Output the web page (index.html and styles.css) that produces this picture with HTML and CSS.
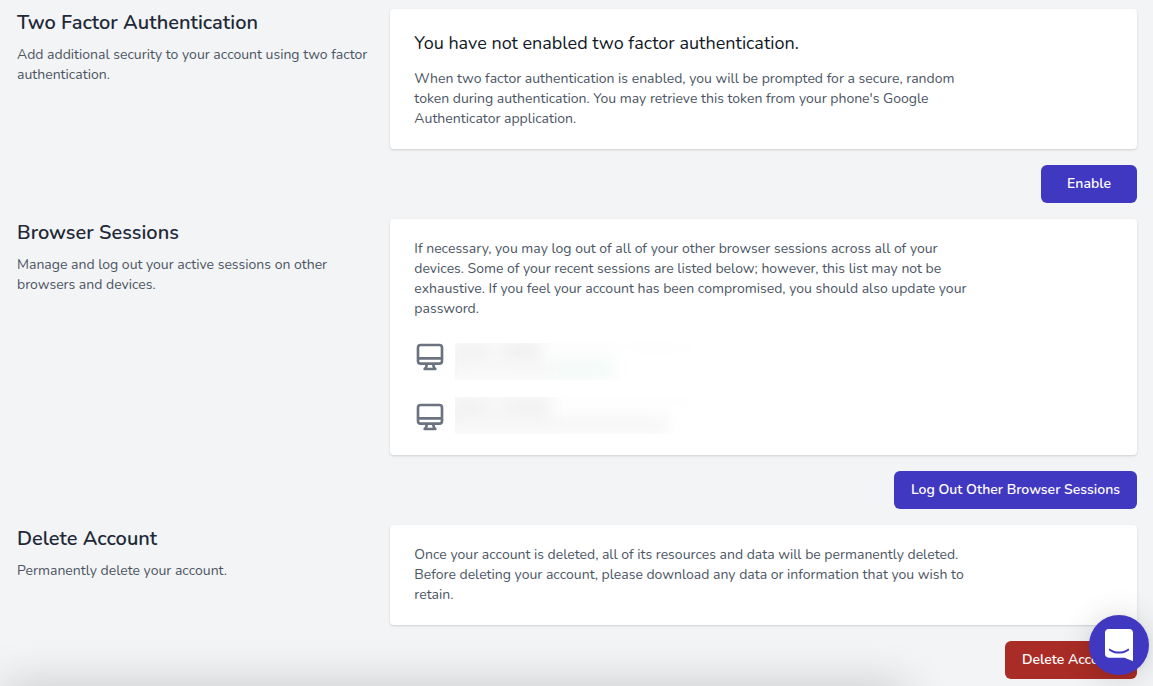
FILE: index.html
```html
<!DOCTYPE html>
<html lang="en">
<head>
    <meta charset="UTF-8">
    <meta name="viewport" content="width=device-width, initial-scale=1.0">
    <title>Profile</title>
    <link rel="stylesheet" href="styles.css">
</head>
<body>

    <main class="settings">

        <section class="section">
            <div class="section-title">
                <h2>Two Factor Authentication</h2>
                <p>Add additional security to your account using two factor authentication.</p>
            </div>
            <div class="section-content">
                <div class="card">
                    <h3>You have not enabled two factor authentication.</h3>
                    <p>When two factor authentication is enabled, you will be prompted for a secure, random token during authentication. You may retrieve this token from your phone's Google Authenticator application.</p>
                </div>
                <button type="button" class="btn">Enable</button>
            </div>
        </section>

        <section class="section">
            <div class="section-title">
                <h2>Browser Sessions</h2>
                <p>Manage and log out your active sessions on other browsers and devices.</p>
            </div>
            <div class="section-content">
                <div class="card">
                    <p>If necessary, you may log out of all of your other browser sessions across all of your devices. Some of your recent sessions are listed below; however, this list may not be exhaustive. If you feel your account has been compromised, you should also update your password.</p>
                    <div class="sessions">
                        <div class="session-icons">
                            <svg class="device" viewBox="0 0 24 24"><path d="M9.75 17L9 20l-1 1h8l-1-1-.75-3M3 13h18M5 17h14a2 2 0 002-2V5a2 2 0 00-2-2H5a2 2 0 00-2 2v10a2 2 0 002 2z"/></svg>
                            <svg class="device" viewBox="0 0 24 24"><path d="M9.75 17L9 20l-1 1h8l-1-1-.75-3M3 13h18M5 17h14a2 2 0 002-2V5a2 2 0 00-2-2H5a2 2 0 00-2 2v10a2 2 0 002 2z"/></svg>
                        </div>
                        <div class="session-details">
                            <div class="hidden-info current"></div>
                            <div class="hidden-info"></div>
                        </div>
                    </div>
                </div>
                <button type="button" class="btn">Log Out Other Browser Sessions</button>
            </div>
        </section>

        <section class="section">
            <div class="section-title">
                <h2>Delete Account</h2>
                <p>Permanently delete your account.</p>
            </div>
            <div class="section-content">
                <div class="card">
                    <p>Once your account is deleted, all of its resources and data will be permanently deleted. Before deleting your account, please download any data or information that you wish to retain.</p>
                </div>
                <button type="button" class="btn btn-danger">Delete Account</button>
            </div>
        </section>

    </main>

    <div class="bottom-panel"></div>

    <button type="button" class="chat-launcher" aria-label="Open chat">
        <svg viewBox="0 0 28 32"><path d="M28 32s-4.714-1.855-8.527-3.34H3.437C1.54 28.66 0 27.026 0 25.013V3.644C0 1.633 1.54 0 3.437 0h21.125c1.898 0 3.437 1.632 3.437 3.645v18.404H28V32zm-4.139-11.982a.88.88 0 00-1.292-.105c-.03.026-3.015 2.681-8.57 2.681-5.486 0-8.517-2.636-8.571-2.684a.88.88 0 00-1.29.107 1.01 1.01 0 00-.219.708.992.992 0 00.318.664c.142.128 3.537 3.15 9.762 3.15 6.226 0 9.621-3.022 9.763-3.15a.992.992 0 00.317-.664 1.01 1.01 0 00-.218-.707z"/></svg>
    </button>

</body>
</html>
```

FILE: styles.css
```css
* {
    box-sizing: border-box;
}

body {
    margin: 0;
    background-color: #f3f4f6;
    color: #4b5563;
    font-family: Nunito, Lato, sans-serif;
    font-size: 14px;
    line-height: 20px;
}

h2, h3, p {
    margin: 0;
}

.settings {
    display: flex;
    flex-direction: column;
    gap: 16px;
    padding: 9px 16px 7px 17px;
}

.section {
    display: grid;
    grid-template-columns: 1fr 2fr;
}

.section-title {
    padding-right: 16px;
}

.section-title h2 {
    margin-bottom: 8px;
    color: #1f2937;
    font-size: 20px;
    font-weight: 600;
    line-height: 28px;
}

.section-content {
    display: flex;
    flex-direction: column;
    align-items: flex-end;
    gap: 16px;
}

.card {
    width: 100%;
    padding: 20px 24px;
    background-color: #fff;
    border-radius: 4px;
    box-shadow: 0 1px 3px rgba(0, 0, 0, 0.1), 0 1px 2px rgba(0, 0, 0, 0.06);
}

.card h3 {
    margin-bottom: 12px;
    color: #111827;
    font-size: 18px;
    font-weight: 400;
    line-height: 28px;
}

.card p {
    max-width: 560px;
}

/* sessions */
.sessions {
    display: flex;
    gap: 9px;
    margin-top: 20px;
}

.session-icons {
    display: flex;
    flex-direction: column;
    gap: 24px;
}

.device {
    width: 32px;
    height: 36px;
    fill: none;
    stroke: #6b7280;
    stroke-width: 2;
    stroke-linecap: round;
    stroke-linejoin: round;
}

.session-details {
    display: flex;
    flex-direction: column;
    justify-content: center;
    gap: 17px;
    padding-top: 2px;
}

/* blurred session name and address */
.hidden-info {
    width: 240px;
    height: 37px;
    overflow: hidden;
}

.hidden-info::before {
    content: "";
    display: block;
    height: 100%;
    background:
        linear-gradient(to right, #f1f1f2 32px, #f7f7f7 32px, #f7f7f7 50px, #f1f1f2 50px) left top / 96px 18px no-repeat,
        linear-gradient(#f6f6f6, #f6f6f6) left bottom / 214px 18px no-repeat;
    box-shadow: -12px 0 #f4f4f5, 0 -10px 0 -2px #fafafa;
    filter: blur(8px);
}

.hidden-info.current::before {
    background:
        linear-gradient(to right, #f0f0f1 32px, #f7f7f7 32px, #f7f7f7 50px, #ededef 50px) left top / 86px 14px no-repeat,
        linear-gradient(to right, #f7f7f7 98px, #f3faf7 98px) left bottom / 160px 22px no-repeat;
}

/* buttons */
.btn {
    min-width: 96px;
    height: 38px;
    padding: 0 17px;
    border: 0;
    border-radius: 6px;
    background-color: #4138c2;
    color: #fff;
    font-family: inherit;
    font-size: 14px;
    font-weight: 600;
    line-height: 20px;
    cursor: pointer;
}

.btn-danger {
    background-color: #a92c26;
}

/* panel below the window edge, only its shadow is visible */
.bottom-panel {
    position: fixed;
    left: 4px;
    right: 248px;
    bottom: -80px;
    height: 80px;
    box-shadow: 0 0 48px rgba(0, 0, 0, 0.18);
}

.chat-launcher {
    position: fixed;
    right: 4px;
    bottom: 11px;
    display: flex;
    align-items: center;
    justify-content: center;
    width: 60px;
    height: 60px;
    padding: 0;
    border: 0;
    border-radius: 50%;
    background-color: #4138c2;
    box-shadow: 0 1px 6px rgba(0, 0, 0, 0.06), 0 2px 32px rgba(0, 0, 0, 0.16);
    cursor: pointer;
}

.chat-launcher svg {
    width: 28px;
    height: 32px;
    fill: #fff;
}
```
